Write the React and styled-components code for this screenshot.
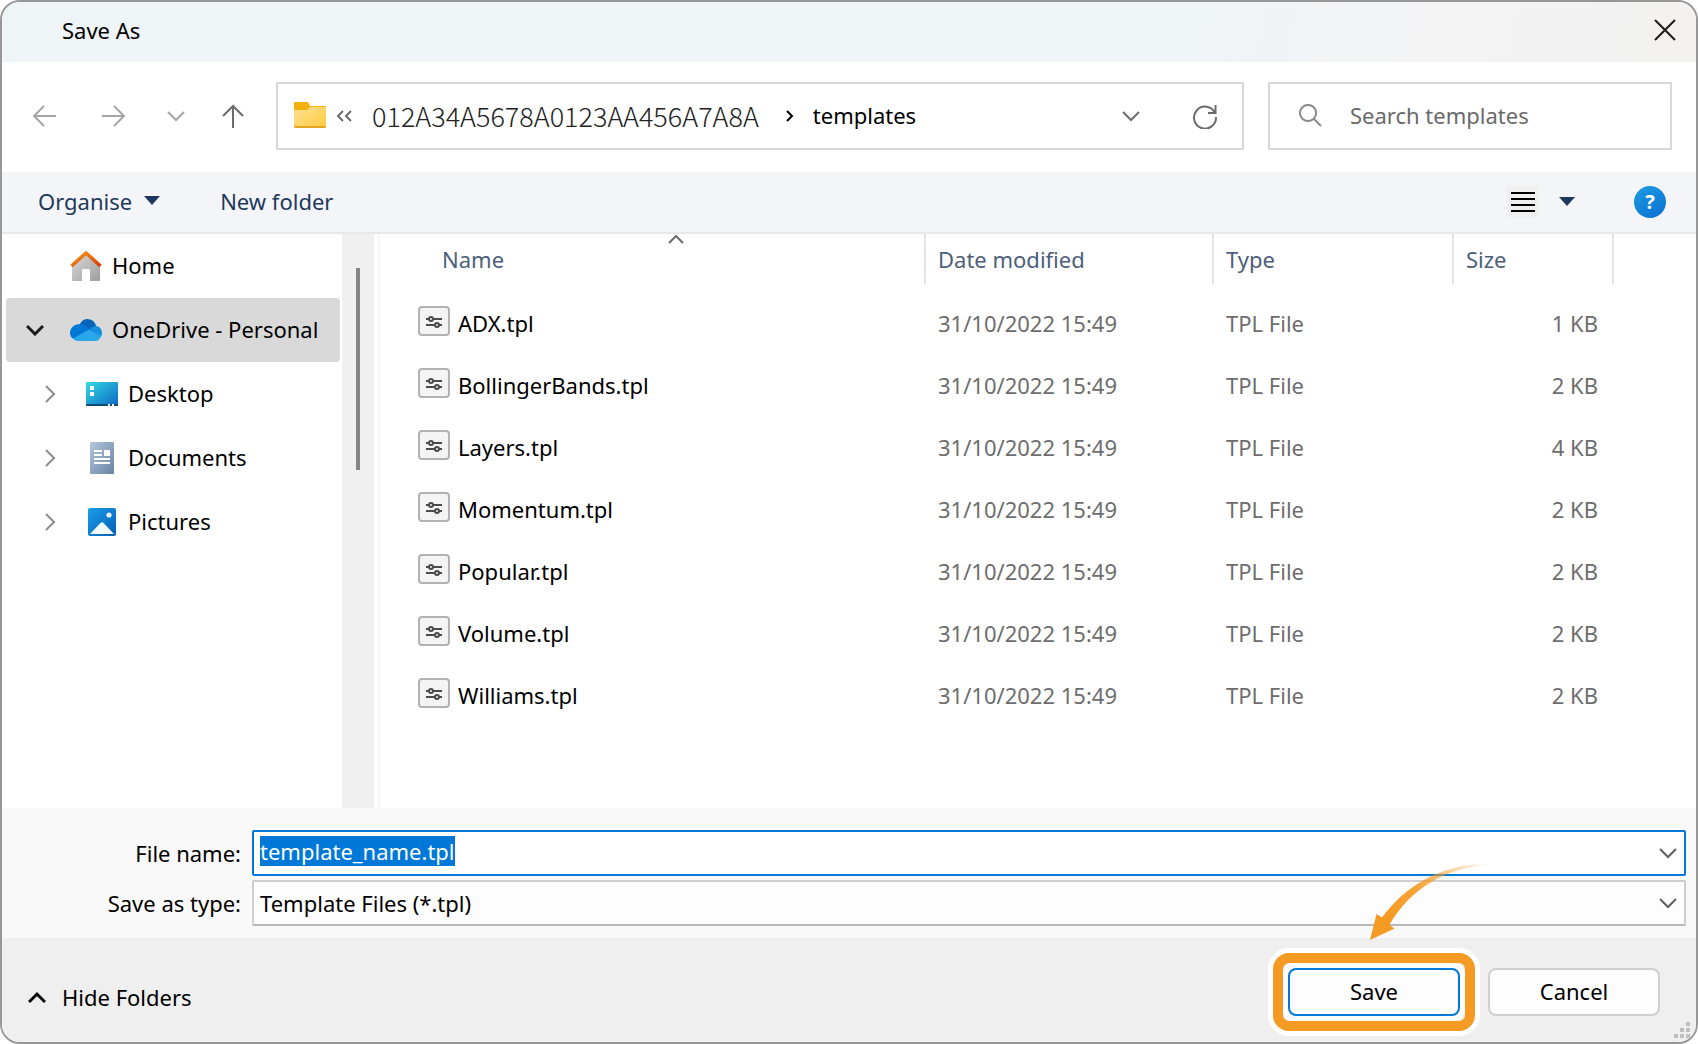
import React, { useEffect, useRef } from 'react';
import styled, { createGlobalStyle, css } from 'styled-components';

const GlobalStyle = createGlobalStyle`
  * {
    box-sizing: border-box;
  }

  body {
    margin: 0;
    background: #fff;
    color: #000;
    font-family: 'Noto Sans', 'Open Sans', sans-serif;
    font-size: 22px;
    line-height: 30px;
  }

  button,
  input,
  select {
    margin: 0;
    padding: 0;
    border: 0;
    background: none;
    color: inherit;
    font: inherit;
  }
`;

const Dialog = styled.div`
  position: relative;
  display: flex;
  flex-direction: column;
  min-height: 100vh;
  border: 2px solid #979797;
  border-radius: 20px;
  background: #fff;
  overflow: hidden;
`;

const TitleBar = styled.header`
  display: flex;
  align-items: center;
  justify-content: space-between;
  height: 60px;
  padding: 0 20px 4px 60px;
  background: linear-gradient(100deg, #eff4f7 70%, #f3f3f4 84%, #f3f2f1);
`;

const Title = styled.h1`
  margin: 0;
  font-size: 22px;
  font-weight: 400;
`;

const IconButton = styled.button`
  display: flex;
  align-items: center;
  justify-content: center;
  color: ${({ color }) => color || '#6b6b6b'};
`;

const NavBar = styled.nav`
  display: flex;
  align-items: center;
  height: 110px;
  padding: 0 24px 2px 7px;
`;

const NavButtons = styled.div`
  display: grid;
  grid-template-columns: 70px 70px 54px 60px;
  margin-right: 13px;
`;

const fieldBox = css`
  display: flex;
  align-items: center;
  height: 68px;
  border: 2px solid #d9d9d9;
  background: #fff;
`;

const AddressBar = styled.div`
  ${fieldBox}
  flex: 1;
  padding: 0 24px 0 16px;
`;

const FolderId = styled.span`
  margin: 0 26px 0 18px;
  color: #222;
  font-family: 'Noto Sans CJK JP', sans-serif;
  font-size: 27px;
  font-weight: 300;
`;

const Crumb = styled.span`
  flex: 1;
  margin-left: 18px;
  padding-bottom: 2px;
`;

const AddressActions = styled.div`
  display: flex;
  gap: 52px;
`;

const SearchBox = styled.label`
  ${fieldBox}
  width: 404px;
  gap: 28px;
  margin-left: 24px;
  padding: 0 0 2px 28px;
  color: #8a8a8a;
`;

const SearchInput = styled.input`
  flex: 1;
  min-width: 0;
  outline: none;

  &::placeholder {
    color: #6a6a6a;
    opacity: 1;
  }
`;

const Toolbar = styled.div`
  display: flex;
  align-items: center;
  height: 62px;
  padding: 0 30px 0 36px;
  border-bottom: 2px solid #e6e8ea;
  background: #f4f5f8;
  color: #1e395b;
`;

const ToolButton = styled.button`
  display: flex;
  align-items: center;
  gap: 12px;
  margin-right: 60px;
  padding-bottom: 2px;
`;

const ViewButton = styled.button`
  display: flex;
  align-items: center;
  gap: 20px;
  margin-left: auto;
`;

const HelpButton = styled.button`
  width: 32px;
  height: 32px;
  margin-left: 59px;
  border-radius: 50%;
  background: linear-gradient(150deg, #1e9be4, #0a6fd0);
  color: #fff;
  font-size: 20px;
  font-weight: 700;
`;

const Body = styled.main`
  display: flex;
  flex: 1;
`;

const Sidebar = styled.aside`
  display: flex;
  width: 378px;
  border-right: 2px solid #f5f5f5;
`;

const Tree = styled.div`
  flex: 1;
  padding: 0 2px 0 4px;
`;

const TreeItem = styled.button`
  display: grid;
  grid-template-columns: ${({ $child }) => ($child ? '80px 42px' : '64px 42px')} 1fr;
  align-items: center;
  width: 100%;
  height: 64px;
  border-radius: 4px;
  background: ${({ $selected }) => ($selected ? '#d9d9d9' : 'none')};
  text-align: left;
`;

const TreeLabel = styled.span`
  padding-bottom: 2px;
`;

const TreeArrow = styled.span`
  display: flex;
  justify-content: flex-end;
  padding-right: ${({ $child }) => ($child ? '28px' : '26px')};
  color: ${({ $child }) => ($child ? '#8c8c8c' : '#1b1b1b')};
`;

const ScrollTrack = styled.div`
  width: 32px;
  margin-right: 4px;
  padding-top: 34px;
  background: #f0f0f0;
`;

const ScrollThumb = styled.div`
  width: 4px;
  height: 202px;
  margin: 0 auto;
  background: #868686;
`;

const FileTable = styled.table`
  flex: 1;
  align-self: flex-start;
  table-layout: fixed;
  border-collapse: collapse;
`;

const HeadCell = styled.th`
  position: relative;
  height: 50px;
  padding: 0 0 0 ${({ $first }) => ($first ? '62px' : '12px')};
  border-right: ${({ $last }) => ($last ? '0' : '2px solid #e3e3e3')};
  color: #4c607a;
  font-weight: 400;
  text-align: left;
`;

const SortMark = styled.span`
  position: absolute;
  top: 0;
  right: 0;
  left: 48px;
  display: flex;
  justify-content: center;
  color: #6b6b6b;
`;

const Spacer = styled.tbody`
  height: 8px;
`;

const Cell = styled.td`
  height: 62px;
  padding: 0 ${({ $right }) => ($right ? '15px' : '0')} 0 13px;
  color: #6d6d6d;
  text-align: ${({ $right }) => ($right ? 'right' : 'left')};
`;

const NameCell = styled(Cell)`
  padding-left: 38px;
  color: #000;
`;

const FileName = styled.div`
  display: flex;
  align-items: center;
  gap: 8px;

  svg {
    margin-bottom: 4px;
  }
`;

const Form = styled.form`
  display: grid;
  grid-template-columns: 239px 1fr;
  row-gap: 4px;
  column-gap: 11px;
  padding: 22px 10px 12px 0;
  background: #f9f9f9;
`;

const FieldLabel = styled.label`
  line-height: 46px;
  text-align: right;
`;

const Field = styled.div`
  position: relative;
  display: flex;
  height: 46px;
`;

const FieldArrow = styled.span`
  position: absolute;
  top: 0;
  right: 9px;
  bottom: 0;
  display: flex;
  align-items: center;
  color: #5f5f5f;
  pointer-events: none;
`;

const NameInput = styled.input`
  width: 100%;
  padding: 0 36px 4px 6px;
  border: 2px solid #0078d7;
  border-radius: 2px;
  background: #fff;
  outline: none;

  &::selection {
    background: #0078d7;
    color: #fff;
  }
`;

const TypeSelect = styled.select`
  width: 100%;
  padding: 0 36px 0 6px;
  border: 2px solid #cfcfcf;
  border-bottom-color: #b8b8b8;
  border-radius: 2px;
  background: #fdfdfd;
  appearance: none;
`;

const Footer = styled.footer`
  display: flex;
  align-items: center;
  height: 104px;
  padding: 4px 36px 0 26px;
  background: #efefef;
`;

const HideFolders = styled.button`
  display: flex;
  align-items: center;
  gap: 16px;
  margin-top: 10px;
`;

const Actions = styled.div`
  display: flex;
  gap: 28px;
  margin-left: auto;
`;

const ActionButton = styled.button`
  width: 172px;
  height: 48px;
  padding-bottom: 2px;
  border: 2px solid ${({ $primary }) => ($primary ? '#0078d7' : '#d0d0d0')};
  border-radius: 8px;
  background: #fdfdfd;
`;

const Highlight = styled.div`
  position: relative;
  border-radius: 6px;
  background: #fff;
  box-shadow: 0 0 0 5px #fff;

  &::after {
    content: '';
    position: absolute;
    inset: -15px;
    border: 10px solid #f59a23;
    border-radius: 16px;
    box-shadow: 0 0 0 5px #fff;
    pointer-events: none;
  }
`;

const Pointer = styled.svg`
  position: absolute;
  bottom: 74px;
  left: 80px;
  pointer-events: none;
`;

const Grip = styled.svg`
  position: absolute;
  right: 6px;
  bottom: 4px;
`;

const Stroke = ({ w, h, d, width = 2 }) =>
  <svg width={w} height={h} viewBox={`0 0 ${w} ${h}`} fill="none" stroke="currentColor" strokeWidth={width} aria-hidden="true">
    <path d={d} />
  </svg>;

const ChevronDown = () => <Stroke w={18} h={12} d="M1 2l8 8 8-8" />;

const Triangle = () =>
  <svg width="16" height="10" viewBox="0 0 16 10" aria-hidden="true">
    <path d="M0 0h16L8 9z" fill="#1e395b" />
  </svg>;

const FolderIcon = () =>
  <svg width="32" height="28" viewBox="0 0 32 28" aria-hidden="true">
    <defs>
      <linearGradient id="folder" x1="0" y1="0" x2="1" y2="1">
        <stop offset="0" stopColor="#ffe194" />
        <stop offset="1" stopColor="#ffca3e" />
      </linearGradient>
    </defs>
    <path d="M1 0h13l2 4h15a1 1 0 0 1 1 1v8H0V1a1 1 0 0 1 1-1z" fill="#f5b00d" />
    <path d="M0 8h13l3-3h16v20a1 1 0 0 1-1 1H1a1 1 0 0 1-1-1z" fill="url(#folder)" />
    <path d="M0 24h32a2 2 0 0 1-2 2H2a2 2 0 0 1-2-2z" fill="#e5a524" />
  </svg>;

const HomeIcon = () =>
  <svg width="32" height="32" viewBox="0 0 32 32" aria-hidden="true">
    <defs>
      <linearGradient id="wall" x1="0" y1="0" x2="1" y2="1">
        <stop offset="0" stopColor="#dadada" />
        <stop offset="1" stopColor="#9d9d9d" />
      </linearGradient>
      <linearGradient id="roof" x1="0" y1="0" x2="1" y2="1">
        <stop offset="0" stopColor="#f99a1c" />
        <stop offset="1" stopColor="#d83b01" />
      </linearGradient>
    </defs>
    <path d="M16 4l14 12v14a1 1 0 0 1-1 1h-9V20a1 1 0 0 0-1-1h-6a1 1 0 0 0-1 1v11H3a1 1 0 0 1-1-1V16z" fill="url(#wall)" />
    <path d="M1.500 16L16 3l14.500 13" fill="none" stroke="url(#roof)" strokeWidth="3.600" strokeLinejoin="round" />
  </svg>;

const CloudIcon = () =>
  <svg width="32" height="22" viewBox="0 0 32 22" aria-hidden="true">
    <path d="M9 9C9 4 13 0 17 0c5 0 8 3 9 7l-8 7z" fill="#0364b8" />
    <path d="M10 5c3 0 5 1 7 3l7 5L4 20c-3-1-4-4-4-6 0-5 4-9 10-9z" fill="#0078d4" />
    <path d="M20 10c2-2 4-3 6-3 4 0 6 4 6 7 0 2-1 4-2 5z" fill="#1490df" />
    <path d="M3 19.500L19 10.500 31 17c-1 3-3 5-6 5H8c-2 0-4-1-5-2.500z" fill="#28a8ea" />
  </svg>;

const DesktopIcon = () =>
  <svg width="32" height="24" viewBox="0 0 32 24" aria-hidden="true">
    <defs>
      <linearGradient id="desk" x1="0" y1="0" x2="1" y2="1">
        <stop offset="0" stopColor="#35dbe4" />
        <stop offset="1" stopColor="#0a66c4" />
      </linearGradient>
    </defs>
    <rect width="32" height="24" rx="1" fill="url(#desk)" />
    <path d="M0 22h32v1a1 1 0 0 1-1 1H1a1 1 0 0 1-1-1z" fill="#114a74" />
    <path d="M4 4h4v4H4zM4 10h4v4H4zM22 22h2v2h-2zM26 22h2v2h-2z" fill="#fff" />
  </svg>;

const DocumentIcon = () =>
  <svg width="32" height="32" viewBox="0 0 32 32" aria-hidden="true">
    <defs>
      <linearGradient id="doc" x1="0" y1="0" x2="1" y2="1">
        <stop offset="0" stopColor="#b3c6dc" />
        <stop offset="1" stopColor="#6884a4" />
      </linearGradient>
    </defs>
    <rect x="4" width="24" height="32" rx="1" fill="url(#doc)" />
    <path d="M8 8h8v2H8zM8 12h8v2H8zM18 8h6v6h-6zM8 16h16v2H8zM8 20h16v2H8z" fill="#fff" />
  </svg>;

const PictureIcon = () =>
  <svg width="32" height="28" viewBox="0 0 32 28" aria-hidden="true">
    <defs>
      <linearGradient id="pic" x1="0" y1="0" x2="1" y2="1">
        <stop offset="0" stopColor="#1a9ce8" />
        <stop offset="1" stopColor="#0560b8" />
      </linearGradient>
    </defs>
    <rect x="2" width="28" height="28" rx="2" fill="url(#pic)" />
    <path d="M4 26l10.500-11a2 2 0 0 1 3 0L28 26z" fill="#f2f7fd" />
    <circle cx="23" cy="7" r="2.600" fill="#e8f3fd" />
  </svg>;

const TplIcon = () =>
  <svg width="32" height="30" viewBox="0 0 32 30" aria-hidden="true">
    <rect x="1" y="1" width="30" height="28" rx="3" fill="#f4f4f4" stroke="#b2b2b2" strokeWidth="2" />
    <g fill="none" stroke="#4b4b4b" strokeWidth="2">
      <path d="M8 13h3M15 13h9M8 19h9M21 19h3" />
      <circle cx="13" cy="13" r="2" />
      <circle cx="19" cy="19" r="2" />
    </g>
  </svg>;

const places = [
  { name: 'Home', icon: <HomeIcon /> },
  { name: 'OneDrive - Personal', icon: <CloudIcon />, open: true },
  { name: 'Desktop', icon: <DesktopIcon />, child: true },
  { name: 'Documents', icon: <DocumentIcon />, child: true },
  { name: 'Pictures', icon: <PictureIcon />, child: true },
];

const files = [
  { name: 'ADX.tpl', size: '1 KB' },
  { name: 'BollingerBands.tpl', size: '2 KB' },
  { name: 'Layers.tpl', size: '4 KB' },
  { name: 'Momentum.tpl', size: '2 KB' },
  { name: 'Popular.tpl', size: '2 KB' },
  { name: 'Volume.tpl', size: '2 KB' },
  { name: 'Williams.tpl', size: '2 KB' },
];

const Navigation = () =>
  <NavBar>
    <NavButtons>
      <IconButton color="#a6a6a6" aria-label="Back">
        <Stroke w={24} h={24} d="M24 12H2M12 2L2 12l10 10" />
      </IconButton>
      <IconButton color="#a6a6a6" aria-label="Forward">
        <Stroke w={24} h={24} d="M0 12h22M12 2l10 10-10 10" />
      </IconButton>
      <IconButton color="#a6a6a6" aria-label="Recent locations">
        <ChevronDown />
      </IconButton>
      <IconButton aria-label="Up">
        <Stroke w={24} h={24} d="M12 24V2M2 12L12 2l10 10" />
      </IconButton>
    </NavButtons>
    <AddressBar>
      <FolderIcon />
      <IconButton aria-label="Parent folders">
        <Stroke w={28} h={12} d="M17 1l-5 5 5 5M25 1l-5 5 5 5" />
      </IconButton>
      <FolderId>012A34A5678A0123AA456A7A8A</FolderId>
      <Stroke w={10} h={14} d="M2 2l5 5-5 5" />
      <Crumb>templates</Crumb>
      <AddressActions>
        <IconButton aria-label="Previous locations">
          <ChevronDown />
        </IconButton>
        <IconButton aria-label="Refresh">
          <Stroke w={26} h={26} d="M23 10A11 11 0 1 0 24 14M23.500 2v8H16" />
        </IconButton>
      </AddressActions>
    </AddressBar>
    <SearchBox>
      <Stroke w={24} h={24} d="M10 2a8 8 0 1 0 .1 0zM16 16l7 7" />
      <SearchInput type="search" placeholder="Search templates" aria-label="Search templates" />
    </SearchBox>
  </NavBar>;

const Folders = () =>
  <Sidebar>
    <Tree>
      {places.map(({ name, icon, open, child }) =>
        <TreeItem key={name} $child={child} $selected={open}>
          <TreeArrow $child={child}>
            {open && <Stroke w={18} h={12} width={3} d="M1 2l8 8 8-8" />}
            {child && <Stroke w={14} h={18} d="M2 1l8 8-8 8" />}
          </TreeArrow>
          {icon}
          <TreeLabel>{name}</TreeLabel>
        </TreeItem>
      )}
    </Tree>
    <ScrollTrack>
      <ScrollThumb />
    </ScrollTrack>
  </Sidebar>;

const Files = () =>
  <FileTable>
    <colgroup>
      <col />
      <col width="288" />
      <col width="240" />
      <col width="160" />
      <col width="83" />
    </colgroup>
    <thead>
      <tr>
        <HeadCell $first aria-sort="ascending">
          Name
          <SortMark>
            <Stroke w={16} h={10} d="M1 9l7-7 7 7" />
          </SortMark>
        </HeadCell>
        <HeadCell>Date modified</HeadCell>
        <HeadCell>Type</HeadCell>
        <HeadCell>Size</HeadCell>
        <HeadCell $last />
      </tr>
    </thead>
    <Spacer>
      <tr />
    </Spacer>
    <tbody>
      {files.map(({ name, size }) =>
        <tr key={name}>
          <NameCell>
            <FileName>
              <TplIcon />
              {name}
            </FileName>
          </NameCell>
          <Cell>31/10/2022 15:49</Cell>
          <Cell>TPL File</Cell>
          <Cell $right>{size}</Cell>
          <td />
        </tr>
      )}
    </tbody>
  </FileTable>;

const SaveForm = () => {
  const nameRef = useRef(null);

  useEffect(() => {
    nameRef.current.focus();
    nameRef.current.select();
  }, []);

  return (
    <Form onSubmit={e => e.preventDefault()}>
      <FieldLabel htmlFor="file-name">File name:</FieldLabel>
      <Field>
        <NameInput id="file-name" ref={nameRef} defaultValue="template_name.tpl" spellCheck={false} />
        <FieldArrow>
          <ChevronDown />
        </FieldArrow>
      </Field>
      <FieldLabel htmlFor="file-type">Save as type:</FieldLabel>
      <Field>
        <TypeSelect id="file-type">
          <option>Template Files (*.tpl)</option>
        </TypeSelect>
        <FieldArrow>
          <ChevronDown />
        </FieldArrow>
      </Field>
    </Form>
  );
};

const SavePointer = () =>
  <Pointer width="126" height="80" viewBox="0 0 126 80" aria-hidden="true">
    <defs>
      <linearGradient id="fade" gradientUnits="userSpaceOnUse" x1="20" y1="60" x2="124" y2="0">
        <stop offset="0" stopColor="#f59a23" />
        <stop offset="0.350" stopColor="#f59a23" stopOpacity="0.900" />
        <stop offset="1" stopColor="#f59a23" stopOpacity="0" />
      </linearGradient>
    </defs>
    <path d="M2 78L8.500 52l5.500 3.500C36 25 74 0 124 2 80 5 42 26 21.500 63l5 3.500z" fill="url(#fade)" />
  </Pointer>;

const App = () =>
  <Dialog>
    <GlobalStyle />
    <TitleBar>
      <Title>Save As</Title>
      <IconButton color="#1b1b1b" aria-label="Close">
        <Stroke w={22} h={22} d="M1 1l20 20M21 1L1 21" />
      </IconButton>
    </TitleBar>
    <Navigation />
    <Toolbar>
      <ToolButton>
        Organise
        <Triangle />
      </ToolButton>
      <ToolButton>New folder</ToolButton>
      <ViewButton aria-label="Change view">
        <svg width="32" height="32" viewBox="0 0 32 32" aria-hidden="true">
          <path d="M0 0h32v32H0z" fill="#f0f0f0" />
          <path d="M4 6h24v2H4zM4 12h24v2H4zM4 18h24v2H4zM4 24h24v2H4z" />
        </svg>
        <Triangle />
      </ViewButton>
      <HelpButton aria-label="Help">?</HelpButton>
    </Toolbar>
    <Body>
      <Folders />
      <Files />
    </Body>
    <SaveForm />
    <Footer>
      <HideFolders>
        <Stroke w={18} h={14} width={3} d="M1 12l8-8 8 8" />
        Hide Folders
      </HideFolders>
      <Actions>
        <Highlight>
          <ActionButton $primary>Save</ActionButton>
          <SavePointer />
        </Highlight>
        <ActionButton>Cancel</ActionButton>
      </Actions>
    </Footer>
    <Grip width="16" height="16" viewBox="0 0 16 16" aria-hidden="true">
      <path d="M12 0h4v4h-4zM6 6h4v4H6zM12 6h4v4h-4zM0 12h4v4H0zM6 12h4v4H6zM12 12h4v4h-4z" fill="#bfbfbf" />
    </Grip>
  </Dialog>;

export default App;
